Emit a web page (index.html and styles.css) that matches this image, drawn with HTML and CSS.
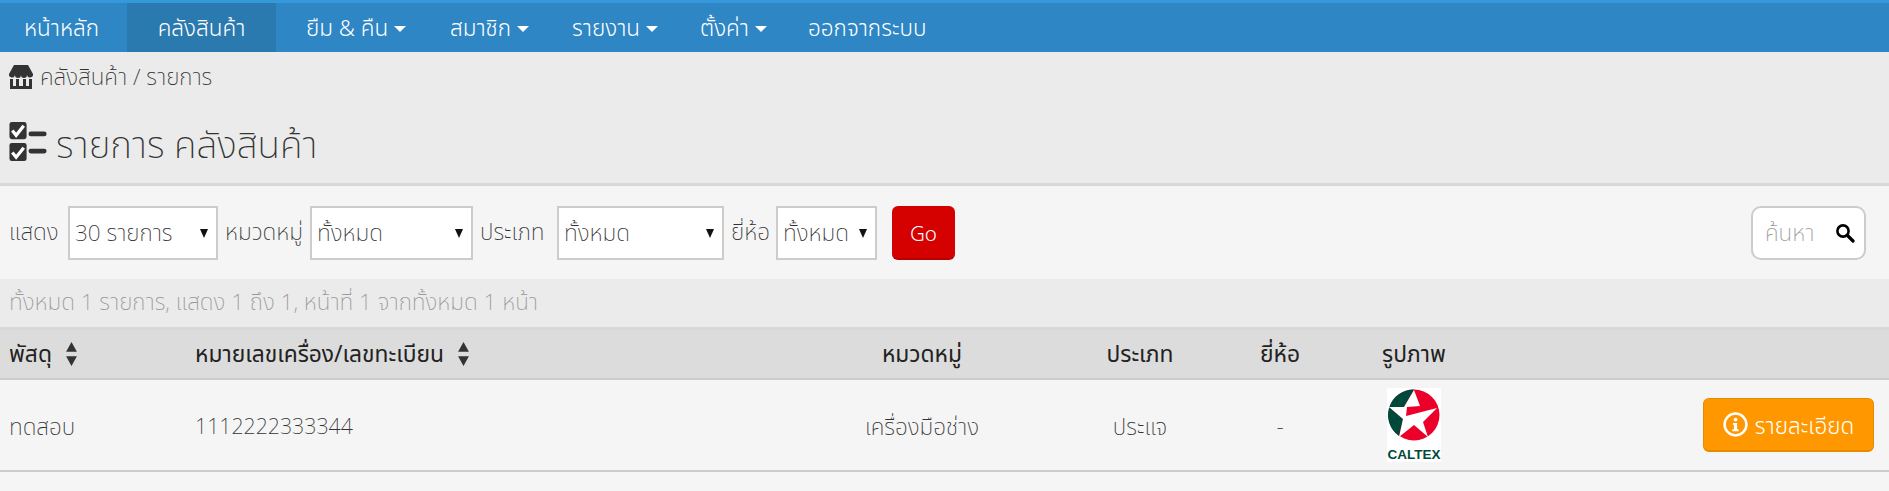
FILE: index.html
```html
<!DOCTYPE html>
<html lang="th">
<head>
<meta charset="utf-8">
<title>รายการ คลังสินค้า</title>
<link rel="stylesheet" href="styles.css">
</head>
<body>
<nav class="nav">
  <a class="nav-item nav-home">หน้าหลัก</a>
  <a class="nav-item nav-active">คลังสินค้า</a>
  <a class="nav-item nav-a">ยืม &amp; คืน<i class="caret"></i></a>
  <a class="nav-item nav-b">สมาชิก<i class="caret"></i></a>
  <a class="nav-item nav-c">รายงาน<i class="caret"></i></a>
  <a class="nav-item nav-d">ตั้งค่า<i class="caret"></i></a>
  <a class="nav-item nav-e">ออกจากระบบ</a>
</nav>
<header class="head">
  <div class="crumb">
    <svg class="store" viewBox="0 0 24 24"><path d="M5 0h14l5 9a3 3 0 0 1-6 1 3 3 0 0 1-6 0 3 3 0 0 1-6 0 3 3 0 0 1-6-1zM1 14h3v7h3v-7h3v7h4v-7h3v7h3v-7h3v10H1z" fill="#333"/></svg>
    <span class="crumb-text">คลังสินค้า / รายการ</span>
  </div>
  <h1 class="title">
    <svg class="tasks" viewBox="0 0 40 42"><rect x="0" y="0" width="18" height="18" rx="2.5" fill="#333"/><rect x="0" y="22" width="18" height="19" rx="2.5" fill="#333"/><path d="M3 9l4 5 8-10M3 32l4 5 8-10" fill="none" stroke="#fff" stroke-width="3.4"/><rect x="20" y="10" width="19" height="5" rx="2.5" fill="#333"/><rect x="20" y="28" width="19" height="5" rx="2.5" fill="#333"/></svg>
    <span class="title-text">รายการ คลังสินค้า</span>
  </h1>
</header>
<form class="filters">
  <label class="lbl l1">แสดง</label>
  <span class="sel s1">30 รายการ<i class="arrow"></i></span>
  <label class="lbl l2">หมวดหมู่</label>
  <span class="sel s2">ทั้งหมด<i class="arrow"></i></span>
  <label class="lbl l3">ประเภท</label>
  <span class="sel s3">ทั้งหมด<i class="arrow"></i></span>
  <label class="lbl l4">ยี่ห้อ</label>
  <span class="sel s4">ทั้งหมด<i class="arrow"></i></span>
  <button class="go" type="button">Go</button>
  <div class="search">
    <span>ค้นหา</span>
    <svg class="mag" viewBox="0 0 20 20"><circle cx="8" cy="8" r="5.6" fill="none" stroke="#000" stroke-width="2.6"/><path d="M12.5 12.5l5.5 5.5" stroke="#000" stroke-width="3.2" stroke-linecap="round"/></svg>
  </div>
</form>
<div class="summary">ทั้งหมด 1 รายการ, แสดง 1 ถึง 1, หน้าที่ 1 จากทั้งหมด 1 หน้า</div>
<table class="tbl">
  <thead>
    <tr>
      <th class="c1">พัสดุ<svg class="sort" viewBox="0 0 12 24"><path d="M6 1l5 9H1zM6 23l-5-9h10z" fill="#333"/></svg></th>
      <th class="c2">หมายเลขเครื่อง/เลขทะเบียน<svg class="sort" viewBox="0 0 12 24"><path d="M6 1l5 9H1zM6 23l-5-9h10z" fill="#333"/></svg></th>
      <th class="c3">หมวดหมู่</th>
      <th class="c4">ประเภท</th>
      <th class="c5">ยี่ห้อ</th>
      <th class="c6">รูปภาพ</th>
      <th class="c7"></th>
    </tr>
  </thead>
  <tbody>
    <tr>
      <td class="c1 txt">ทดสอบ</td>
      <td class="c2 txt num">1112222333344</td>
      <td class="c3 txt">เครื่องมือช่าง</td>
      <td class="c4 txt">ประแจ</td>
      <td class="c5 txt">-</td>
      <td class="c6">
        <svg class="logo" viewBox="0 0 54 74">
          <rect width="54" height="74" fill="#fff"/>
          <circle cx="27" cy="27" r="25.5" fill="#ec0029"/>
          <path d="M27 1.5A25.5 25.5 0 0 0 12 48L16 31 2 19 17 19Z" fill="#00493a"/>
          <path d="M27 2 33 18 20 19 19 28 50 20 36 34 41 49 27 37 12 49 16 31 2 19 17 19Z" fill="#fff"/>
          <text class="logo-text" x="27" y="71" text-anchor="middle">CALTEX</text>
        </svg>
      </td>
      <td class="c7">
        <button class="detail" type="button">
          <svg class="info" viewBox="0 0 24 24"><circle cx="12" cy="12" r="10.5" fill="none" stroke="#fff" stroke-width="2.4"/><circle cx="12" cy="7.3" r="1.8" fill="#fff"/><path d="M9.5 10.5h4v6h1.5v2H9v-2h1.5v-4h-1z" fill="#fff"/></svg>
          <span class="detail-text">รายละเอียด</span>
        </button>
      </td>
    </tr>
  </tbody>
</table>
</body>
</html>
```
FILE: styles.css
```css
* { box-sizing: border-box; }
html, body { margin: 0; padding: 0; }
body {
  background: #f5f5f5;
  color: #333;
  font-family: "Noto Sans Thai", "Noto Sans", "Open Sans", sans-serif;
  font-size: 22.5px;
  font-weight: 200;
  height: 491px;
  overflow: hidden;
}
.nav {
  display: flex;
  height: 52px;
  background: #2e86c4;
  border-top: 3px solid #3498db;
  color: #fff;
  font-weight: 300;
}
.nav-item { display: flex; align-items: center; white-space: nowrap; padding-top: 3px; }
.nav-home { padding-left: 24px; width: 127px; }
.nav-active { background: #2a7aaf; width: 149px; justify-content: center; }
.nav-a { margin-left: 30px; width: 144px; }
.nav-b { width: 122px; }
.nav-c { width: 128px; }
.nav-d { width: 108px; }
.caret {
  display: inline-block;
  margin-left: 6px;
  border-top: 6px solid #fff;
  border-left: 6px solid transparent;
  border-right: 6px solid transparent;
}
.head {
  height: 134px;
  background: #ebebeb;
  border-bottom: 3px solid #d8d8d8;
  padding: 9px 9px 0;
  overflow: hidden;
}
.crumb { display: flex; align-items: center; gap: 7px; height: 32px; }
.crumb-text { margin-top: 2px; }
.store { width: 24px; height: 24px; }
.title {
  display: flex;
  align-items: center;
  gap: 8px;
  margin: 25px 0 0;
  font-size: 37px;
  font-weight: 200;
  height: 48px;
}
.title-text { margin-top: 10px; }
.tasks { width: 39px; height: 40px; }
.filters {
  display: flex;
  align-items: center;
  height: 93px;
  padding: 0 23px 0 9px;
}
.lbl { white-space: nowrap; margin-top: 1px; }
.l1 { width: 59px; }
.l2 { width: 85px; }
.l3 { width: 77px; }
.l4 { width: 45px; }
.sel {
  position: relative;
  display: flex;
  align-items: center;
  height: 54px;
  margin-right: 7px;
  padding: 2px 0 0 5px;
  background: #fff;
  border: 2px solid #ccc;
}
.s1 { width: 150px; }
.s2 { width: 163px; }
.s3 { width: 167px; }
.s4 { width: 101px; margin-right: 15px; }
.arrow {
  position: absolute;
  right: 8px;
  top: 21px;
  border-top: 9px solid #111;
  border-left: 4.5px solid transparent;
  border-right: 4.5px solid transparent;
}
.go {
  width: 63px;
  height: 54px;
  padding: 5px 0 0;
  background: #d50000;
  color: #fff;
  border: 0;
  border-bottom: 2px solid #b80000;
  border-radius: 6px;
  font: inherit;
  font-size: 20.5px;
  font-weight: 300;
}
.search {
  display: flex;
  align-items: center;
  justify-content: space-between;
  width: 115px;
  height: 54px;
  margin-left: auto;
  padding: 2px 9px 0 12px;
  background: #fff;
  border: 2px solid #ccc;
  border-radius: 10px;
  color: #999;
}
.mag { width: 20px; height: 20px; margin-top: -2px; }
.summary {
  height: 48px;
  line-height: 48px;
  padding-left: 9px;
  background: #ebebeb;
  color: #999;
}
.tbl {
  width: 1889px;
  table-layout: fixed;
  border-collapse: collapse;
}
.tbl th {
  height: 50px;
  padding: 3px 0 0;
  background: #dcdcdc;
  border-top: 3px solid #d8d8d8;
  border-bottom: 2px solid #ccc;
  font-size: 22.8px;
  font-weight: 400;
  color: #222;
}
.tbl td {
  height: 92px;
  padding: 0;
  text-align: center;
  border-bottom: 2px solid #ccc;
}
.tbl td.txt { padding-top: 6px; }
.tbl td.num { font-size: 21.3px; }
.tbl .c1 { width: 186px; padding-left: 9px; text-align: left; }
.tbl .c2 { width: 614px; padding-left: 9px; text-align: left; }
.tbl .c3 { width: 244px; }
.tbl .c4 { width: 192px; }
.tbl .c5 { width: 88px; }
.tbl .c6 { width: 180px; }
.tbl .c7 { text-align: right; padding-right: 15px; }
.sort { width: 13px; height: 26px; margin: -3px 0 0 13px; vertical-align: middle; }
.logo { display: block; width: 54px; height: 74px; margin: 0 auto; }
.logo-text { font-family: "Liberation Sans", sans-serif; font-size: 13.5px; font-weight: 700; fill: #00493a; }
.detail {
  display: inline-flex;
  align-items: center;
  justify-content: center;
  gap: 7px;
  width: 171px;
  height: 54px;
  background: #ff9800;
  color: #fff;
  border: 1px solid #e68a00;
  border-bottom-width: 2px;
  border-radius: 6px;
  font: inherit;
  font-weight: 300;
}
.detail-text { margin-top: 6px; }
.info { width: 25px; height: 25px; }
```
